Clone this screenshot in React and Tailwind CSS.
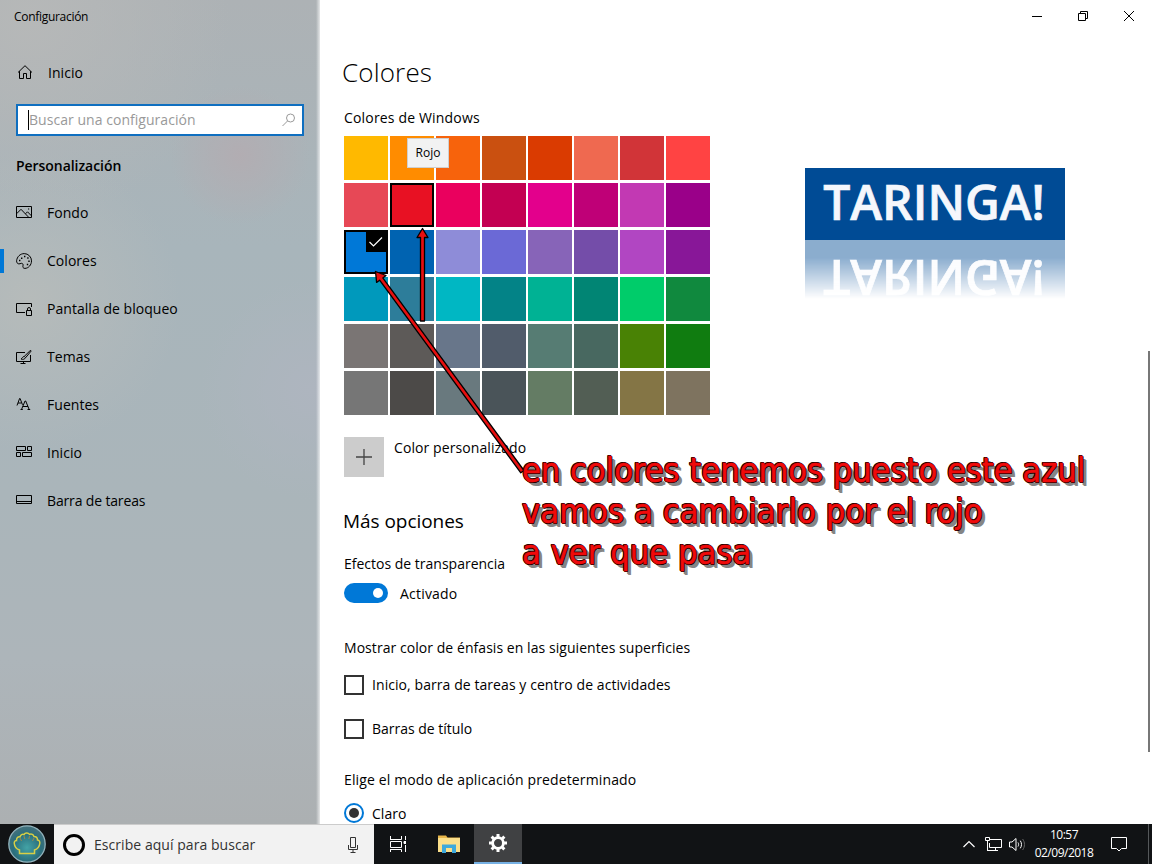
import clsx from 'clsx';

const SWATCHES = [
  'bg-[#ffb900]', 'bg-[#ff8c00]', 'bg-[#f7630c]', 'bg-[#ca5010]', 'bg-[#da3b01]', 'bg-[#ef6950]', 'bg-[#d13438]', 'bg-[#ff4343]',
  'bg-[#e74856]', 'bg-[#e81123]', 'bg-[#ea005e]', 'bg-[#c30052]', 'bg-[#e3008c]', 'bg-[#bf0077]', 'bg-[#c239b3]', 'bg-[#9a0089]',
  'bg-[#0078d7]', 'bg-[#0063b1]', 'bg-[#8e8cd8]', 'bg-[#6b69d6]', 'bg-[#8764b8]', 'bg-[#744da9]', 'bg-[#b146c2]', 'bg-[#881798]',
  'bg-[#0099bc]', 'bg-[#2d7d9a]', 'bg-[#00b7c3]', 'bg-[#038387]', 'bg-[#00b294]', 'bg-[#018574]', 'bg-[#00cc6a]', 'bg-[#10893e]',
  'bg-[#7a7574]', 'bg-[#5d5a58]', 'bg-[#68768a]', 'bg-[#515c6b]', 'bg-[#567c73]', 'bg-[#486860]', 'bg-[#498205]', 'bg-[#107c10]',
  'bg-[#767676]', 'bg-[#4c4a48]', 'bg-[#69797e]', 'bg-[#4a5459]', 'bg-[#647c64]', 'bg-[#525e54]', 'bg-[#847545]', 'bg-[#7e735f]',
];

const HOVERED = 9;
const SELECTED = 16;

function Icon({ size = 16, className, children }) {
  return (
    <svg width={size} height={size} viewBox={`0 0 ${size} ${size}`} fill="none" stroke="currentColor" className={clsx('shrink-0', className)}>
      {children}
    </svg>
  );
}

const icons = {
  home: (
    <Icon>
      <path d="M1 8.5 8 1.7l7 6.8M2.500 7.200v7.300h4V9.500h3v5h4V7.200" />
    </Icon>
  ),
  picture: (
    <Icon>
      <path d="M.5 1.500h15v11H.5zM.5 8.800 5 4.300l7.500 7.800M9.500 8.800l2-2 4 4.100" />
      <path d="M12 4h1.200" />
    </Icon>
  ),
  palette: (
    <Icon>
      <path d="M8.3.6a7.3 7.3 0 0 1 7.2 7.3c0 4-3 7.4-6.6 7.5-1.8 0-2.3-1.3-1.9-2.6.4-1.500-.3-2.600-1.700-2.500-1 .1-1.500.8-2.500.6C1.200 10.600.500 9.400.600 7.800 1 3.800 4.100.600 8.300.600z" />
      <path d="M5 5.200h1.400M8 3.500h1.400M11.200 5h1.400M12.300 8.200h1.400M10.800 11.500h1.400M3 7.600h1.400" strokeWidth="1.500" />
    </Icon>
  ),
  lockScreen: (
    <Icon>
      <path d="M9 11.500H.5v-9h15V6M10.500 9.500h5v5h-5zM11.500 9.500V8a1.500 1.500 0 0 1 3 0v1.500" />
    </Icon>
  ),
  themes: (
    <Icon>
      <path d="M9 3.500H.5v9h14V6M7.500 12.500v2M4.500 14.500h5" />
      <path d="M14.500 1.200 8.300 7.400l1.300 1.300 5.500-6.600zM8.300 7.500c-1.800 0-2 1.900-3.300 2.500 1.800.8 4 .3 4.300-1.300" />
    </Icon>
  ),
  fonts: (
    <Icon>
      <path d="M1 8.500 3.600 1.500h.5l2.400 6.300M2 6h3.500" />
      <path d="M5.500 12.500 9 4h.7l3.500 8.500M6.800 9.500H12M4.500 12.500h2.300M11.500 12.500h2.700" />
    </Icon>
  ),
  start: (
    <Icon>
      <path d="M.5 1.500h9v4h-9zM11.500 1.500h4v4h-4zM.5 7.500h4v4h-4zM6.500 7.500h9v4h-9z" />
    </Icon>
  ),
  taskbar: (
    <Icon>
      <path d="M.5 2.500h15v8H.5zM.5 8.500h15" />
    </Icon>
  ),
};

const NAV = [
  { icon: icons.picture, label: 'Fondo' },
  { icon: icons.palette, label: 'Colores', active: true },
  { icon: icons.lockScreen, label: 'Pantalla de bloqueo' },
  { icon: icons.themes, label: 'Temas' },
  { icon: icons.fonts, label: 'Fuentes' },
  { icon: icons.start, label: 'Inicio' },
  { icon: icons.taskbar, label: 'Barra de tareas', text: 'tracking-[-0.15px]' },
];

function Sidebar() {
  return (
    <aside className="w-80 shrink-0 flex flex-col bg-[#aab4b9] bg-[linear-gradient(to_right,transparent_316px,#ffffffb0_320px),radial-gradient(circle_at_240px_155px,#b2adb2_0,transparent_70px),radial-gradient(circle_at_30px_20px,#b6b8b8_0,transparent_200px),radial-gradient(circle_at_30px_300px,#b6bbba_0,transparent_150px),radial-gradient(circle_at_310px_390px,#aeb5bf_0,transparent_110px),linear-gradient(to_bottom,#adb2b5_0,#a8b5bb_30%,#aab5ba_60%,#adb5ba_80%,#acb0b2_100%)]">
      <div className="mt-px h-8 pl-3.5 flex items-center text-xs tracking-[-0.3px]">Configuración</div>
      <div className="mt-[23px] h-8 pl-[17px] flex items-center gap-[15px]">
        {icons.home}
        <span className="pt-0.5">Inicio</span>
      </div>
      <div className="mt-4 mx-4 h-8 border-2 border-[#0f6fc0] bg-white flex items-center justify-between pl-2.5 pr-[5px] text-[#999]">
        <span className="flex items-center">
          <span className="w-px h-5 bg-black" />
          Buscar una configuración
        </span>
        <Icon>
          <circle cx="9.500" cy="6" r="4" />
          <path d="M6.500 9 1.500 14" />
        </Icon>
      </div>
      <h2 className="mt-5 pl-4 h-5 leading-5 font-semibold tracking-[-0.05px]">Personalización</h2>
      <nav className="mt-[13px]">
        {NAV.map(({ icon, label, text, active }, i) => (
          <div key={i} className="h-12 flex items-center">
            <div className={clsx('w-1 h-6 mr-3', active && 'bg-[#0078d7]')} />
            {icon}
            <span className={clsx('ml-[15px]', text)}>{label}</span>
          </div>
        ))}
      </nav>
    </aside>
  );
}

function Swatch({ color, index }) {
  const framed = index === HOVERED || index === SELECTED;
  return (
    <div className={clsx('relative size-11', color, framed && 'border-2 border-black')}>
      {index === SELECTED && (
        <div className="absolute right-0 top-0 size-5 bg-black text-white">
          <Icon size={20}>
            <path d="M3.500 10 7.500 14 16 5.500" strokeWidth="1.200" />
          </Icon>
        </div>
      )}
      {index === HOVERED && (
        <div className="absolute left-[15px] -top-[47px] z-10 w-[42px] h-[30px] border border-[#cfcfcf] bg-[#f2f2f2] flex items-center justify-center text-xs">
          Rojo
        </div>
      )}
    </div>
  );
}

function Checkbox({ className, children }) {
  return (
    <div className={clsx('h-5 flex items-center gap-2', className)}>
      <div className="size-5 border-2 border-[#333]" />
      {children}
    </div>
  );
}

function Settings() {
  return (
    <section className="w-[461px] pl-6 flex flex-col">
      <h1 className="mt-5 -ml-0.5 h-10 leading-10 text-[26px] font-[340] tracking-[0.15px]">Colores</h1>
      <div className="mt-4 h-5 leading-5 tracking-[0.17px]">Colores de Windows</div>
      <div className="mt-2 grid grid-cols-[repeat(8,44px)] gap-x-0.5 gap-y-[3px]">
        {SWATCHES.map((color, i) => (
          <Swatch key={color} color={color} index={i} />
        ))}
      </div>
      <div className="mt-[22px] h-10 flex gap-2.5">
        <div className="size-10 bg-[#ccc] text-[#444] flex items-center justify-center">
          <Icon>
            <path d="M8 0v16M0 8h16" strokeWidth="1.300" />
          </Icon>
        </div>
        <span className="mt-px h-5 leading-5 tracking-[0.09px]">Color personalizado</span>
      </div>
      <h2 className="mt-[31px] -ml-px h-[26px] leading-[26px] text-[19px] tracking-[-0.05px]">Más opciones</h2>
      <div className="mt-5 h-5 leading-5 tracking-[0px]">Efectos de transparencia</div>
      <div className="mt-[9px] h-5 flex items-center gap-3">
        <div className="w-11 h-5 rounded-full bg-[#0078d7] flex items-center justify-end pr-[5px]">
          <div className="size-2.5 rounded-full bg-white" />
        </div>
        <span className="pt-0.5 tracking-[0.2px]">Activado</span>
      </div>
      <div className="mt-[35px] h-5 leading-5 tracking-[0.055px]">Mostrar color de énfasis en las siguientes superficies</div>
      <Checkbox className="mt-[17px] tracking-[0.07px]">Inicio, barra de tareas y centro de actividades</Checkbox>
      <Checkbox className="mt-6 tracking-[-0.02px]">Barras de título</Checkbox>
      <div className="mt-[31px] h-5 leading-5 tracking-[0.13px]">Elige el modo de aplicación predeterminado</div>
      <div className="mt-[13px] h-5 flex items-center gap-2">
        <div className="size-5 rounded-full border-2 border-[#0078d7] flex items-center justify-center">
          <div className="size-2.5 rounded-full bg-[#333]" />
        </div>
        <span className="pt-0.5">Claro</span>
      </div>
    </section>
  );
}

function LogoPlate() {
  return (
    <div className="h-[72px] pb-1 pr-0.5 bg-[#004b95] flex items-center justify-center font-semibold text-[48px] leading-[68px] tracking-[0px] text-[#f5f7fc] [-webkit-text-stroke:0.7px_#f5f7fc]">
      TARINGA!
    </div>
  );
}

function Logo() {
  return (
    <div className="mt-[136px] w-[260px]">
      <LogoPlate />
      <div className="-scale-y-100 opacity-45 [mask-image:linear-gradient(to_top,black_25%,transparent_82%)]" aria-hidden="true">
        <LogoPlate />
      </div>
    </div>
  );
}

function WindowControls() {
  return (
    <div className="h-8 flex justify-end">
      <div className="w-[46px] flex items-center justify-center">
        <Icon size={10}><path d="M0 5.500h10" /></Icon>
      </div>
      <div className="w-[46px] flex items-center justify-center">
        <Icon size={10}><path d="M.5 2.500h7v7h-7zM2.500 2.500v-2h7v7h-2" /></Icon>
      </div>
      <div className="w-[46px] flex items-center justify-center">
        <Icon size={10}><path d="M0 0l10 10M10 0 0 10" /></Icon>
      </div>
    </div>
  );
}

// Red arrows and caption drawn over the window
function Annotations() {
  return (
    <>
      <svg className="absolute inset-0 z-20" width="1152" height="864" fill="#e60f0f" stroke="#000" strokeWidth="1.300" strokeLinejoin="round">
        <path d="M422.500 228.500 428 237.500h-3.500V321h-4v-83.500H417z" />
        <path d="M375.500 271.500l10.500 4-3.200 2.400L524 470.500l-3.200 2.300L379.600 280.200l-3 2.200z" />
      </svg>
      <div className="absolute z-20 left-[522px] top-[450px] font-['DejaVu_Sans_Condensed','DejaVu_Sans'] text-[34px] leading-[41px] whitespace-pre text-[#f00a0a] [-webkit-text-stroke:0.5px_#f00a0a] [text-shadow:1px_0_0_#200,-1px_0_0_#200,0_1px_0_#200,0_-1px_0_#200,1px_1px_0_#200,-1px_-1px_0_#200,3px_3px_0_#858585,4px_4px_0_#858585]">
        <p className="tracking-[0.03px]">en colores tenemos puesto este azul</p>
        <p className="tracking-[0.16px]">vamos a cambiarlo por el rojo</p>
        <p className="tracking-[0.1px]">a ver que pasa</p>
      </div>
    </>
  );
}

function Taskbar() {
  return (
    <footer className="h-10 flex bg-[#111315] text-white">
      <div className="w-[54px] flex items-center justify-center">
        <svg width="40" height="40" viewBox="0 0 40 40">
          <defs>
            <radialGradient id="orb" cx="50%" cy="60%" r="55%">
              <stop offset="0" stopColor="#43a3a6" />
              <stop offset="0.700" stopColor="#2a6e7c" />
              <stop offset="1" stopColor="#41707c" />
            </radialGradient>
          </defs>
          <circle cx="20" cy="20" r="18.200" fill="url(#orb)" stroke="#93b4bd" strokeWidth="1.300" />
          <path d="M12.500 29.500v-3.500c-3-1-5-3.500-5.300-7 .2-2 1.300-2.700 2.300-2.500 0-2.500 1.300-4 3.500-3.700.7-2 2.300-3 4-2.200 1-1.700 4-2.200 5.500-.2 2-.8 4 .2 4.500 2.200 2.500 0 3.500 1.500 3.500 3.500 1.800.2 2.500 1.500 2.300 3.200-.3 3.200-2.300 5.700-5.300 6.700v3.500z" fill="none" stroke="#d9cf45" strokeWidth="1.500" />
          <path d="M13 14l1.500 3M17 12l.8 3M22.500 12l-.6 3M27 14l-1.500 3" fill="none" stroke="#b98a3c" strokeWidth="0.800" />
        </svg>
      </div>
      <div className="w-80 bg-[#f2f2f2] border-t border-[#ccc] flex items-center pl-[9px] pr-[13px] text-[#333]">
        <div className="size-[22px] rounded-full border-[3px] border-black" />
        <span className="ml-[9px] tracking-[0.05px]">Escribe aquí para buscar</span>
        <Icon className="ml-auto">
          <path d="M5.500.5h5v10h-5zM3.500 8v4.500h9V8M8 12.500v3M5.500 15.500h5" />
        </Icon>
      </div>
      <div className="w-12 flex items-center justify-center">
        <Icon>
          <path d="M0 3.500h11.500M.5 0v3.500M11.500 0v3.500M.5 5.500h11v6H.5zM0 13.500h11.500M.5 13.500V16M11.500 13.500V16M15.500 0v4M15.500 9v7" />
          <path d="M14 5.500h3v2h-3z" fill="currentColor" />
        </Icon>
      </div>
      <div className="w-[52px] pl-0.5 flex items-center justify-center">
        <svg width="22" height="20" viewBox="0 0 22 20">
          <path d="M0 1.500h8l1.500 2H22V18H0z" fill="#e8b64a" />
          <path d="M0 4h22v14H0z" fill="#fbdf8a" />
          <path d="M4 10.500h14V19h-4v-5H8v5H4z" fill="#3ea9dc" />
        </svg>
      </div>
      <div className="w-12 bg-[#404143] border-b-2 border-[#76b1e4] flex items-center justify-center">
        <svg width="20" height="20" viewBox="0 0 20 20" fill="none" stroke="#fff">
          <circle cx="10" cy="10" r="5.400" strokeWidth="2.800" />
          <path d="M10 1v3M10 16v3M1 10h3M16 10h3M3.600 3.600l2.200 2.200M14.200 14.200l2.200 2.200M3.600 16.400l2.200-2.200M14.200 5.800l2.200-2.200" strokeWidth="3" />
        </svg>
      </div>
      <div className="ml-auto flex items-center">
        <Icon size={14} className="mr-[9px]">
          <path d="M1.500 10 7 4.500l5.500 5.500" strokeWidth="1.200" />
        </Icon>
        <Icon size={17} className="mr-[7px]">
          <path d="M5 3.500h11.500v8H4.500V7M.5 1.500h4v3h-4zM2.500 4.500v9.500M10.500 11.500v3M2 14.500h11" />
        </Icon>
        <Icon size={17} className="mr-2">
          <path d="M.5 6v5h2.500l4 3.500v-12L3 6zM9 6.500c.8 1.200.8 2.800 0 4M11.300 4.700c1.600 2.200 1.600 5.400 0 7.600" />
          <path d="M13.600 3c2.500 3.200 2.500 7.800 0 11" stroke="#666" />
        </Icon>
        <div className="w-[60px] text-center text-xs leading-[18px]">
          <div className="tracking-[-0.5px]">10:57</div>
          <div className="tracking-[-0.5px]">02/09/2018</div>
        </div>
        <Icon size={18} className="ml-4 mr-5">
          <path d="M1.500 2.500h15v11h-5L9 16l-2.500-2.500h-5z" />
        </Icon>
        <div className="w-px h-10 mr-[3px] bg-[#55585a]" />
      </div>
    </footer>
  );
}

export default function App() {
  return (
    <div className="relative w-[1152px] h-[864px] overflow-hidden flex flex-col bg-white text-black text-sm tracking-[0.04px] font-['Open_Sans','Noto_Sans',sans-serif]">
      <div className="h-[824px] flex">
        <Sidebar />
        <main className="flex-1 flex flex-col">
          <WindowControls />
          <div className="flex-1 flex">
            <Settings />
            <div className="ml-6">
              <Logo />
            </div>
            <div className="ml-auto mr-0.5 mt-[319px] w-0.5 h-[401px] bg-[#777]" />
          </div>
        </main>
      </div>
      <Taskbar />
      <Annotations />
    </div>
  );
}
